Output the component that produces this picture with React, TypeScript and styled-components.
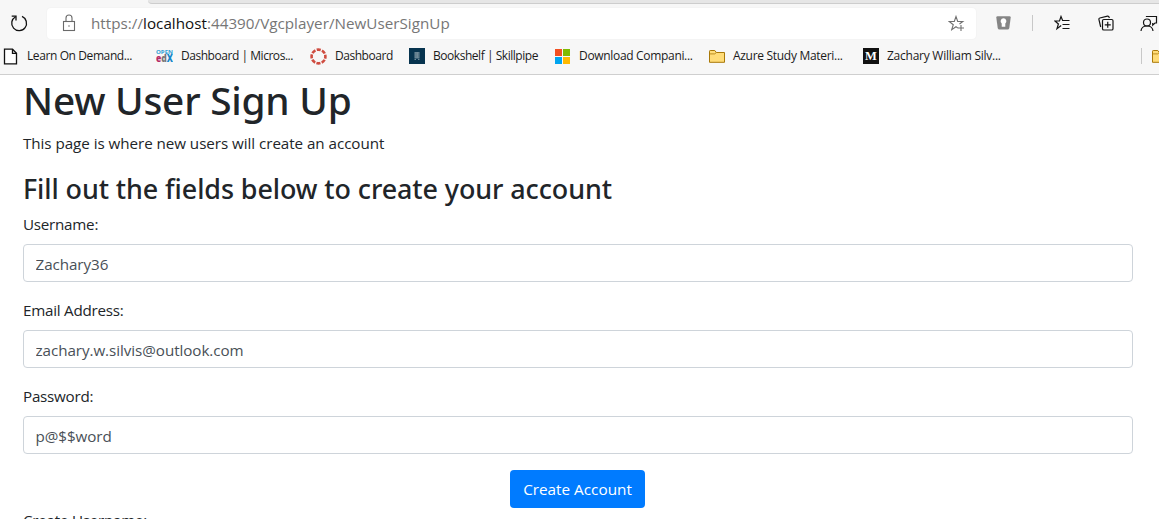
import React from 'react';
import styled, { createGlobalStyle } from 'styled-components';

const GlobalStyle = createGlobalStyle`
  * { box-sizing: border-box; }
  html, body { margin: 0; height: 519px; overflow: hidden; background: #fff; }
  body { font-family: "Open Sans", "Noto Sans", sans-serif; color: #212529; }
  svg { display: block; flex: none; }
`;

const Window = styled.div`
  height: 519px;
  overflow: hidden;
`;

const Chrome = styled.header`
  height: 75px;
  background: #f7f7f7;
  border-bottom: 1px solid #cfcfcf;
  overflow: hidden;
`;

const TabStrip = styled.div`
  height: 4px;
  padding-left: 148px;
  background: #f7f7f7;
`;

const InactiveTabs = styled.div`
  height: 4px;
  background: #e6e6e6;
  border-bottom: 1px solid #cdcdcd;
  border-bottom-left-radius: 4px;
`;

const Toolbar = styled.div`
  height: 38px;
  display: flex;
  align-items: center;
  padding-left: 10px;
`;

const AddressBar = styled.div`
  width: 929px;
  height: 31px;
  margin-left: 18px;
  padding: 0 11px 0 15px;
  display: flex;
  align-items: center;
  flex: none;
  background: #fff;
  border-radius: 4px;
  box-shadow: 0 0 2px rgba(0, 0, 0, 0.06);
`;

const Url = styled.span`
  margin-left: 15px;
  flex: 1;
  font-size: 15.2px;
  line-height: 30px;
  letter-spacing: 0.03px;
  color: #767676;
  white-space: nowrap;
  b { font-weight: 400; color: #111; }
`;

const ToolbarActions = styled.div`
  display: flex;
  align-items: center;
  flex: none;
  margin-left: 20px;
`;

const Divider = styled.i<{ $left: number; $right: number }>`
  flex: none;
  width: 1px;
  height: 16px;
  margin: 0 ${p => p.$right}px 0 ${p => p.$left}px;
  background: #c8c8c8;
`;

const Slot = styled.span<{ $gap: number }>`
  flex: none;
  margin-left: ${p => p.$gap}px;
`;

const Bookmarks = styled.nav`
  height: 28px;
  display: flex;
  align-items: center;
  padding-left: 3px;
`;

const Bookmark = styled.span<{ $width: number; $gap: number }>`
  flex: none;
  width: ${p => p.$width}px;
  display: flex;
  align-items: center;
  gap: ${p => p.$gap}px;
`;

const BookmarkLabel = styled.span<{ $ls: number }>`
  font-size: 12px;
  line-height: 20px;
  letter-spacing: ${p => p.$ls}px;
  color: #1b1b1b;
  white-space: nowrap;
`;

const Page = styled.main`
  width: 1110px;
  margin-left: 23px;
`;

const Title = styled.h1`
  margin: 0 0 6px;
  padding-top: 2px;
  font-family: "Noto Sans", "Open Sans", sans-serif;
  font-size: 38.8px;
  line-height: 47.4px;
  font-weight: 500;
  letter-spacing: -0.23px;
`;

const Copy = styled.p`
  margin: 0 0 16px;
  padding-top: 1px;
  font-size: 15.2px;
  line-height: 24px;
  letter-spacing: -0.05px;
`;

const Subtitle = styled.h3`
  margin: 0 0 6px;
  padding-top: 1px;
  font-family: "Noto Sans", "Open Sans", sans-serif;
  font-size: 26.9px;
  line-height: 33.6px;
  font-weight: 500;
  letter-spacing: -0.08px;
`;

const Group = styled.div`
  margin-bottom: 16px;
`;

const Label = styled.label`
  display: block;
  margin-bottom: 8px;
  font-size: 15.2px;
  line-height: 24px;
  letter-spacing: -0.25px;
`;

const Input = styled.input`
  display: block;
  width: 100%;
  height: 38px;
  padding: 6px 12px 4px 11.5px;
  border: 1px solid #ced4da;
  border-radius: 4px;
  outline: 0;
  background: #fff;
  color: #495057;
  font: 400 15.200px/24px "Open Sans", "Noto Sans", sans-serif;
  letter-spacing: -0.06px;
`;

const Actions = styled.div`
  display: flex;
  justify-content: center;
  padding-right: 1px;
`;

const Button = styled.button`
  width: 135px;
  height: 38px;
  padding: 0;
  border: 0;
  border-radius: 4px;
  background: #007bff;
  color: #fff;
  font: 15.300px/24px "Open Sans", "Noto Sans", sans-serif;
  white-space: nowrap;
`;

const Reload = () => (
  <svg width="19" height="20" viewBox="0 0 19 20" fill="none" stroke="#111" strokeWidth="1.3">
    <path d="M12 3.400A7.400 7.400 0 1 1 5.600 3.700" />
    <path d="M1.700 3.200H6V7.500" />
  </svg>
);

const Lock = () => (
  <svg width="14" height="18" viewBox="0 0 14 18" fill="none" stroke="#6a6a6a" strokeWidth="1.1">
    <rect x="1.5" y="7.5" width="11" height="9" />
    <path d="M4 7.500V4a3 3 0 0 1 6 0v3.500" />
    <path d="M6.200 12h1.600" />
  </svg>
);

const AddFavorite = () => (
  <svg width="17" height="17" viewBox="0 0 17 17" fill="none" stroke="#707070" strokeWidth="1.1">
    <path d="M10 13.100 8 11.700 3.700 14.700 5.300 9.700 1.200 6.500H6.300L8 1.500 9.700 6.500H14.800L11.500 9" />
    <path d="M13 10v6M10 13h6" />
  </svg>
);

const Shield = () => (
  <svg width="15" height="14" viewBox="0 0 15 14">
    <path d="M.3 1.500Q.3.300 1.500.300H13.500Q14.700.300 14.700 1.500L13.300 12Q13 13.500 11.500 13.500H3.500Q2 13.500 1.700 12Z" fill="#858585" />
    <path d="M7.500 2.200A3 3 0 0 1 9.300 7.500V10.800H5.700V7.500A3 3 0 0 1 7.500 2.200Z" fill="#fff" />
  </svg>
);

const Favorites = () => (
  <svg width="17" height="16" viewBox="0 0 17 16" fill="none" stroke="#151515" strokeWidth="1.2">
    <path d="M7.200 10.500 3 13.700 4.400 9 .9 6H5.500L7 1.500 8.600 5.500H15.500" />
    <path d="M8.500 9.500h7M8.500 13.500h7" />
  </svg>
);

const Collections = () => (
  <svg width="16" height="16" viewBox="0 0 16 16" fill="none" stroke="#151515" strokeWidth="1.2">
    <rect x="4.500" y="4.500" width="10.500" height="10.500" rx="1.300" />
    <path d="M9.750 6.800v6M6.750 9.800h6" />
    <path d="M2.700 12 .9 4.500Q.7 3.300 1.800 3L9.500 1.100Q10.800.900 11.100 2.200L11.300 3" />
  </svg>
);

const Profile = () => (
  <svg width="18" height="17" viewBox="0 0 18 17" fill="none" stroke="#151515" strokeWidth="1.200">
    <circle cx="7" cy="7.500" r="3.500" />
    <path d="M1 16C1.500 9.300 12.500 9.300 13 16" />
    <path d="M6.500 2V1.500H16.500V8H15L12.700 10.200V8" />
  </svg>
);

const PageIcon = () => (
  <svg width="15" height="17" viewBox="0 0 15 17" fill="none" stroke="#111" strokeWidth="1.300">
    <path d="M1.500 1.200H9.500L13.500 5.300V15.800H1.500Z" fill="#fff" />
    <path d="M9.500 1.200V5.300H13.500" />
  </svg>
);

const OpenEdx = () => (
  <svg width="17" height="16" viewBox="0 0 17 16" fontFamily="Open Sans, sans-serif">
    <text x="0" y="5.500" fontSize="6" fontWeight="700" fill="#2d9ed4" textLength="17" lengthAdjust="spacingAndGlyphs">OPEN</text>
    <text x="0" y="14" fontSize="11" fontWeight="800" textLength="17" lengthAdjust="spacingAndGlyphs">
      <tspan fill="#b52b67">e</tspan><tspan fill="#777">d</tspan><tspan fill="#1687c9">X</tspan>
    </text>
  </svg>
);

const Canvas = () => (
  <svg width="17" height="17" viewBox="0 0 17 17" fill="none">
    <circle cx="8.500" cy="8.500" r="6.900" stroke="#cf4c40" strokeWidth="2.600" strokeDasharray="4.100 1.320" strokeDashoffset="2.050" />
  </svg>
);

const Bookshelf = () => (
  <svg width="16" height="16" viewBox="0 0 16 16">
    <path fill="#07344f" d="M0 0h16v16H0z" />
    <path fill="#6f8a99" d="M5.500 4h5v6.500h-5zM5.500 11h1.500v1H5.500zM9 11h1.500v1H9z" />
    <path stroke="#516f80" strokeWidth=".7" d="M7 4.500v5M9.500 4.500v5" />
  </svg>
);

const Microsoft = () => (
  <svg width="15" height="15" viewBox="0 0 15 15">
    <path fill="#f25022" d="M0 0h7v7H0z" />
    <path fill="#7fba00" d="M8 0h7v7H8z" />
    <path fill="#00a4ef" d="M0 8h7v7H0z" />
    <path fill="#ffb900" d="M8 8h7v7H8z" />
  </svg>
);

const Folder = () => (
  <svg width="16" height="13" viewBox="0 0 16 13">
    <path d="M.5 1.200Q.5.500 1.200.500H5.800L7.300 2.500H15.500V12.300H.500Z" fill="#ffdc78" stroke="#a97908" />
    <path d="M.5 3.900H5.800L7.300 2.500" fill="none" stroke="#a97908" strokeWidth=".8" />
  </svg>
);

const Medium = () => (
  <svg width="16" height="16" viewBox="0 0 16 16">
    <path fill="#111" d="M0 0h16v16H0z" />
    <text x="8" y="12.200" textAnchor="middle" fontFamily="Liberation Serif, serif" fontWeight="700" fontSize="12.500" fill="#fff">M</text>
  </svg>
);

const bookmarks = [
  { icon: <PageIcon />, label: 'Learn On Demand...', width: 153, gap: 9, ls: -0.4 },
  { icon: <OpenEdx />, label: 'Dashboard | Micros...', width: 154, gap: 8, ls: -0.46 },
  { icon: <Canvas />, label: 'Dashboard', width: 99, gap: 8, ls: -0.46 },
  { icon: <Bookshelf />, label: 'Bookshelf | Skillpipe', width: 146, gap: 8, ls: -0.46 },
  { icon: <Microsoft />, label: 'Download Compani...', width: 154, gap: 9, ls: -0.32 },
  { icon: <Folder />, label: 'Azure Study Materi...', width: 154, gap: 8, ls: -0.3 },
  { icon: <Medium />, label: 'Zachary William Silv...', width: 143, gap: 8, ls: -0.25 },
];

const fields = [
  { label: 'Username:', value: 'Zachary36' },
  { label: 'Email Address:', value: 'zachary.w.silvis@outlook.com' },
  { label: 'Password:', value: 'p@$$word' },
];

export default function App() {
  return (
    <Window>
      <GlobalStyle />
      <Chrome>
        <TabStrip><InactiveTabs /></TabStrip>
        <Toolbar>
          <Reload />
          <AddressBar>
            <Lock />
            <Url>https://<b>localhost</b>:44390/Vgcplayer/NewUserSignUp</Url>
            <AddFavorite />
          </AddressBar>
          <ToolbarActions>
            <Shield />
            <Divider $left={21} $right={0} />
            <Slot $gap={21}><Favorites /></Slot>
            <Slot $gap={27}><Collections /></Slot>
            <Slot $gap={26}><Profile /></Slot>
          </ToolbarActions>
        </Toolbar>
        <Bookmarks>
          {bookmarks.map((b, i) => (
            <Bookmark key={i} $width={b.width} $gap={b.gap}>
              {b.icon}
              <BookmarkLabel $ls={b.ls}>{b.label}</BookmarkLabel>
            </Bookmark>
          ))}
          <Divider $left={135} $right={10} />
          <Folder />
        </Bookmarks>
      </Chrome>
      <Page>
        <Title>New User Sign Up</Title>
        <Copy>This page is where new users will create an account</Copy>
        <Subtitle>Fill out the fields below to create your account</Subtitle>
        {fields.map(f => (
          <Group key={f.label}>
            <Label>{f.label}</Label>
            <Input defaultValue={f.value} spellCheck={false} />
          </Group>
        ))}
        <Actions><Button>Create Account</Button></Actions>
        <Label>Create Username:</Label>
      </Page>
    </Window>
  );
}
